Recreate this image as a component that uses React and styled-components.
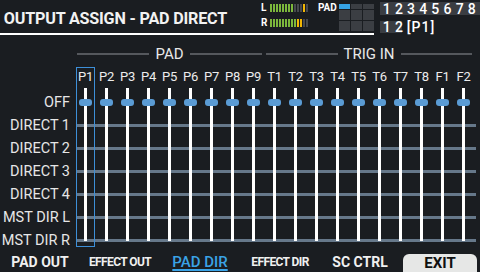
import React from 'react'
import styled, { createGlobalStyle } from 'styled-components'

const GlobalStyle = createGlobalStyle`
  html, body {
    margin: 0;
    padding: 0;
    background: #1a1d21;
  }
  body {
    width: 480px;
    height: 272px;
    overflow: hidden;
    font-family: Roboto, 'Liberation Sans', sans-serif;
    color: #e8e8e8;
  }
`

const Screen = styled.div`
  width: 480px;
  height: 272px;
  display: flex;
  flex-direction: column;
  background: #1a1d21;
`

// ---------- header ----------
const Header = styled.header`
  display: flex;
  height: 35px;
`

const HeaderMain = styled.div`
  display: flex;
  width: 376px;
  height: 33px;
  border-bottom: 2px solid #ffffff;
`

const Title = styled.h1`
  flex: 1;
  margin: 0;
  padding: 3px 0 0 4px;
  display: flex;
  align-items: center;
  font-size: 17px;
  font-weight: 700;
  color: #f2f2f2;
  letter-spacing: -0.2px;
  white-space: nowrap;
  transform: scaleX(0.95);
  transform-origin: left center;
`

const Meters = styled.div`
  display: flex;
  flex-direction: column;
  gap: 7px;
  padding-top: 4px;
`

const MeterRow = styled.div`
  display: flex;
  align-items: center;
  height: 8px;
`

const MeterLabel = styled.span`
  width: 9px;
  font-size: 10px;
  font-weight: 700;
  color: #ffffff;
  line-height: 8px;
`

const Segments = styled.div`
  display: flex;
  gap: 1px;
  height: 8px;
`

const Segment = styled.span`
  width: 2px;
  height: 8px;
  background: ${p => p.$c === 'g' ? '#7cb83c' : p.$c === 'y' ? '#f2b705' : '#46494e'};
`

const PadLabel = styled.span`
  margin: 3px 0 0 10px;
  font-size: 10px;
  font-weight: 700;
  color: #ffffff;
  line-height: 10px;
`

const PadGrid = styled.div`
  margin: 4px 0 0 2px;
  display: grid;
  grid-template-columns: repeat(3, 11px);
  grid-template-rows: 5px 10px 10px;
  gap: 1px;
`

const PadCell = styled.span`
  background: ${p => p.$on ? '#35a2e4' : '#3b3e43'};
`

const HeaderSide = styled.div`
  margin-left: 6px;
  padding-top: 2px;
  flex: 1;
  display: flex;
  flex-direction: column;
  gap: 4px;
`

const NumBox = styled.span`
  display: inline-flex;
  align-items: center;
  height: ${p => p.$h}px;
  padding-left: 3px;
  background: #3a3d42;
  font-size: 14px;
  font-weight: 500;
  color: #ffffff;
  letter-spacing: 4.2px;
`

const BankRow = styled.div`
  display: flex;
  align-items: center;
  gap: 5px;
`

const BankText = styled.span`
  font-size: 14px;
  font-weight: 500;
  color: #ffffff;
  letter-spacing: 1px;
`

// ---------- matrix ----------
const Matrix = styled.div`
  display: grid;
  grid-template-columns: 75px repeat(19, 21px) 6px;
  grid-template-rows: 32px 24px repeat(7, 23px);
`

const Section = styled.div`
  grid-row: 1;
  grid-column: ${p => p.$cols};
  align-self: start;
  margin: 10px 2px 0;
  height: 18px;
  display: flex;
  align-items: center;
  gap: 6px;
  font-size: 15px;
  color: #e8e8e8;

  &::before, &::after {
    content: '';
    flex: 1;
    height: 2px;
    background: #55585d;
  }
`

const ColLabel = styled.span`
  grid-row: 2;
  grid-column: ${p => p.$col};
  padding-top: 2px;
  text-align: center;
  font-size: 13px;
  color: #ececec;
  letter-spacing: -0.3px;
`

const RowLabel = styled.span`
  grid-column: 1;
  grid-row: ${p => p.$row};
  padding-right: 5px;
  text-align: right;
  line-height: 23px;
  font-size: 14.5px;
  color: #e6e6e6;
  white-space: nowrap;
`

const RowLine = styled.span`
  grid-column: 2 / -1;
  grid-row: ${p => p.$row};
  align-self: center;
  height: 3px;
  margin: 0 4px 0 1px;
  background: #66788a;
`

const ColLine = styled.span`
  grid-column: ${p => p.$col};
  grid-row: 3 / 10;
  justify-self: center;
  width: 3px;
  margin: -3px 0 11px;
  background: #ffffff;
`

const Knob = styled.span`
  grid-column: ${p => p.$col};
  grid-row: 3;
  justify-self: center;
  align-self: center;
  width: 13px;
  height: 7px;
  border-radius: 3px;
  background: #5a9bd4;
`

const Cursor = styled.span`
  grid-column: ${p => p.$col};
  grid-row: 2 / 10;
  margin: 0 1px 5px;
  border: 1px solid #3d8fd8;
`

// ---------- footer ----------
const Footer = styled.nav`
  display: grid;
  grid-template-columns: repeat(6, 80px);
  height: 20px;
`

const Tab = styled.span`
  display: flex;
  align-items: center;
  justify-content: center;
  font-size: ${p => p.$small ? 12 : 14}px;
  font-weight: 700;
  color: #f0f0f0;
  letter-spacing: ${p => p.$small ? -0.6 : 0}px;
  white-space: nowrap;
`

const ActiveTab = styled(Tab)`
  font-size: 15px;
  font-weight: 500;
  color: #3aa3e6;
  text-decoration: underline;
  text-decoration-thickness: 2px;
  text-underline-offset: 2px;
`

const ExitButton = styled.span`
  margin: 2px 3px 0;
  border-radius: 6px 6px 0 0;
  background: #e6e7e6;
  display: flex;
  align-items: center;
  justify-content: center;
  font-size: 15px;
  font-weight: 700;
  color: #111111;
`

const columns = ['P1', 'P2', 'P3', 'P4', 'P5', 'P6', 'P7', 'P8', 'P9',
  'T1', 'T2', 'T3', 'T4', 'T5', 'T6', 'T7', 'T8', 'F1', 'F2']
const rows = ['OFF', 'DIRECT 1', 'DIRECT 2', 'DIRECT 3', 'DIRECT 4', 'MST DIR L', 'MST DIR R']
const meterL = 'gggggggg---y-'
const meterR = 'gggggggggyy--'

function Meter({ label, pattern }) {
  return (
    <MeterRow>
      <MeterLabel>{label}</MeterLabel>
      <Segments>
        {pattern.split('').map((c, i) => <Segment key={i} $c={c} />)}
      </Segments>
    </MeterRow>
  )
}

export default function App() {
  return (
    <Screen>
      <GlobalStyle />
      <Header>
        <HeaderMain>
          <Title>OUTPUT ASSIGN - PAD DIRECT</Title>
          <Meters>
            <Meter label='L' pattern={meterL} />
            <Meter label='R' pattern={meterR} />
          </Meters>
          <PadLabel>PAD</PadLabel>
          <PadGrid>
            {Array.from({ length: 9 }).map((_, i) => <PadCell key={i} $on={i === 0} />)}
          </PadGrid>
        </HeaderMain>
        <HeaderSide>
          <NumBox $h={13}>12345678</NumBox>
          <BankRow>
            <NumBox $h={12} style={{ width: '19px' }}>12</NumBox>
            <BankText>[P1]</BankText>
          </BankRow>
        </HeaderSide>
      </Header>

      <Matrix>
        <Section $cols='2 / 11'>PAD</Section>
        <Section $cols='11 / 21'>TRIG IN</Section>
        {columns.map((c, i) => <ColLabel key={c} $col={i + 2}>{c}</ColLabel>)}
        {rows.map((r, i) => <RowLabel key={r} $row={i + 3}>{r}</RowLabel>)}
        {rows.slice(1).map((r, i) => <RowLine key={r} $row={i + 4} />)}
        {columns.map((c, i) => <ColLine key={c} $col={i + 2} />)}
        {columns.map((c, i) => <Knob key={c} $col={i + 2} />)}
        <Cursor $col={2} />
      </Matrix>

      <Footer>
        <Tab>PAD OUT</Tab>
        <Tab $small>EFFECT OUT</Tab>
        <ActiveTab>PAD DIR</ActiveTab>
        <Tab $small>EFFECT DIR</Tab>
        <Tab>SC CTRL</Tab>
        <ExitButton>EXIT</ExitButton>
      </Footer>
    </Screen>
  )
}
